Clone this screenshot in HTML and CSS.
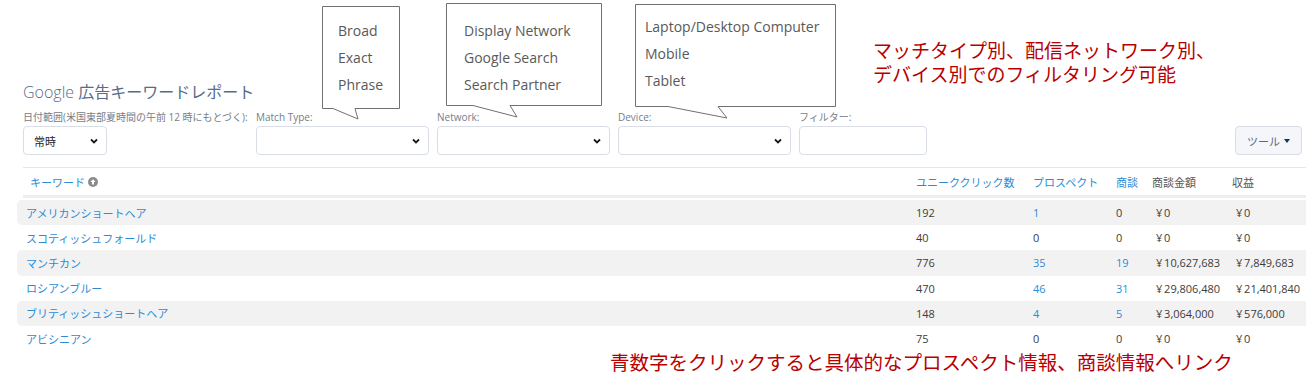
FILE: index.html
```html
<!DOCTYPE html>
<html lang="ja">
<head>
    <meta charset="UTF-8">
    <meta name="viewport" content="width=device-width, initial-scale=1.0">
    <title>Google 広告キーワードレポート</title>
    <link rel="stylesheet" href="styles.css">
</head>
<body>
    <div class="page">
        <h1 class="title"><span class="title-latin">Google</span> 広告キーワードレポート</h1>

        <div class="filters">
            <div class="filter filter-date">
                <label>日付範囲(米国東部夏時間の午前 12 時にもとづく):</label>
                <div class="select select-date">
                    <span>常時</span>
                    <svg class="chevron" width="8" height="6" viewBox="0 0 8 6"><path d="M1 1.5 L4 4.5 L7 1.5" /></svg>
                </div>
            </div>
            <div class="filter">
                <label>Match Type:</label>
                <div class="select">
                    <span></span>
                    <svg class="chevron" width="8" height="6" viewBox="0 0 8 6"><path d="M1 1.5 L4 4.5 L7 1.5" /></svg>
                </div>
            </div>
            <div class="filter">
                <label>Network:</label>
                <div class="select">
                    <span></span>
                    <svg class="chevron" width="8" height="6" viewBox="0 0 8 6"><path d="M1 1.5 L4 4.5 L7 1.5" /></svg>
                </div>
            </div>
            <div class="filter">
                <label>Device:</label>
                <div class="select">
                    <span></span>
                    <svg class="chevron" width="8" height="6" viewBox="0 0 8 6"><path d="M1 1.5 L4 4.5 L7 1.5" /></svg>
                </div>
            </div>
            <div class="filter filter-text">
                <label>フィルター:</label>
                <input type="text" class="text-input">
            </div>
            <button class="tool-btn">ツール
                <svg width="6" height="4" viewBox="0 0 6 4"><path d="M0 0 H6 L3 4 Z" /></svg>
            </button>
        </div>

        <div class="report-table">
            <div class="table-head">
                <div class="col-keyword link">キーワード
                    <svg class="sort-icon" width="10" height="10" viewBox="0 0 10 10">
                        <circle cx="5" cy="5" r="5" />
                        <path d="M5 2.2 L7.6 5 H6 V7.6 H4 V5 H2.4 Z" />
                    </svg>
                </div>
                <div class="link">ユニーククリック数</div>
                <div class="link">プロスペクト</div>
                <div class="link">商談</div>
                <div>商談金額</div>
                <div>収益</div>
            </div>

            <div class="table-row striped">
                <div class="col-keyword link">アメリカンショートヘア</div>
                <div>192</div>
                <div class="link">1</div>
                <div>0</div>
                <div class="money">¥&thinsp;0</div>
                <div class="money">¥&thinsp;0</div>
            </div>
            <div class="table-row">
                <div class="col-keyword link">スコティッシュフォールド</div>
                <div>40</div>
                <div>0</div>
                <div>0</div>
                <div class="money">¥&thinsp;0</div>
                <div class="money">¥&thinsp;0</div>
            </div>
            <div class="table-row striped">
                <div class="col-keyword link">マンチカン</div>
                <div>776</div>
                <div class="link">35</div>
                <div class="link">19</div>
                <div class="money">¥&thinsp;10,627,683</div>
                <div class="money">¥&thinsp;7,849,683</div>
            </div>
            <div class="table-row">
                <div class="col-keyword link">ロシアンブルー</div>
                <div>470</div>
                <div class="link">46</div>
                <div class="link">31</div>
                <div class="money">¥&thinsp;29,806,480</div>
                <div class="money">¥&thinsp;21,401,840</div>
            </div>
            <div class="table-row striped">
                <div class="col-keyword link">ブリティッシュショートヘア</div>
                <div>148</div>
                <div class="link">4</div>
                <div class="link">5</div>
                <div class="money">¥&thinsp;3,064,000</div>
                <div class="money">¥&thinsp;576,000</div>
            </div>
            <div class="table-row">
                <div class="col-keyword link">アビシニアン</div>
                <div>75</div>
                <div>0</div>
                <div>0</div>
                <div class="money">¥&thinsp;0</div>
                <div class="money">¥&thinsp;0</div>
            </div>
        </div>

        <!-- callouts drawn over the filter bar -->
        <svg class="callout-shapes" width="1306" height="386" viewBox="0 0 1306 386">
            <path d="M322.5 6.5 H399.5 V108.5 H355 L358 119 L333 108.5 H322.5 Z" />
            <path d="M446.5 3.5 H601.5 V105.5 H510 L517 117 L473 105.5 H446.5 Z" />
            <path d="M635.5 4.5 H835.5 V106.5 H718 L727 118 L668 106.5 H635.5 Z" />
        </svg>
        <ul class="callout-text callout-match">
            <li>Broad</li>
            <li>Exact</li>
            <li>Phrase</li>
        </ul>
        <ul class="callout-text callout-network">
            <li>Display Network</li>
            <li>Google Search</li>
            <li>Search Partner</li>
        </ul>
        <ul class="callout-text callout-device">
            <li>Laptop/Desktop Computer</li>
            <li>Mobile</li>
            <li>Tablet</li>
        </ul>

        <p class="note note-filter">マッチタイプ別、配信ネットワーク別、<br>デバイス別でのフィルタリング可能</p>
        <p class="note note-link">青数字をクリックすると具体的なプロスペクト情報、商談情報へリンク</p>
    </div>
</body>
</html>
```

FILE: styles.css
```css
* {
    margin: 0;
    padding: 0;
    box-sizing: border-box;
}

body {
    font-family: "Open Sans", "Noto Sans CJK JP", sans-serif;
    background: #ffffff;
    color: #3c3c3c;
    overflow: hidden;
}

.page {
    position: relative;
    width: 1306px;
    height: 386px;
    padding: 82px 0 0 23px;
}

.title {
    font-size: 16px;
    font-weight: normal;
    line-height: 20px;
    color: #566c8a;
}

.title-latin {
    font-weight: 300;
}

/* filter bar */
.filters {
    display: flex;
    align-items: flex-end;
    gap: 8px;
    margin-top: 8px;
    padding-right: 4px;
}

.filter {
    display: flex;
    flex-direction: column;
    gap: 2px;
    width: 173px;
}

.filter-date {
    width: 225px;
}

.filter-text {
    width: 128px;
}

.filter label {
    font-size: 10px;
    line-height: 14px;
    color: #767e89;
    white-space: nowrap;
}

.select {
    display: flex;
    align-items: center;
    justify-content: space-between;
    height: 29px;
    padding: 0 8px 0 10px;
    border: 1px solid #d8dde6;
    border-radius: 4px;
    background: #ffffff;
    font-size: 11px;
    color: #222;
}

.select-date {
    width: 84px;
}

.chevron path {
    fill: none;
    stroke: #1a1a1a;
    stroke-width: 1.8;
}

.text-input {
    height: 29px;
    border: 1px solid #d8dde6;
    border-radius: 4px;
    background: #ffffff;
}

.tool-btn {
    display: flex;
    align-items: center;
    justify-content: center;
    gap: 4px;
    margin-left: auto;
    width: 67px;
    height: 29px;
    border: 1px solid #d8dde6;
    border-radius: 4px;
    background: #f4f6f9;
    font-family: inherit;
    font-size: 11px;
    color: #54698d;
}

.tool-btn svg path {
    fill: #16325c;
}

/* table */
.report-table {
    margin-top: 12px;
}

.table-head {
    display: grid;
    grid-template-columns: 893px 117px 83px 36px 80px 1fr;
    align-items: center;
    height: 31px;
    border-top: 1px solid #e4e6ea;
    border-bottom: 3px solid #eceef1;
    font-size: 11px;
    color: #555;
}

.table-head .col-keyword {
    display: flex;
    align-items: center;
    gap: 3px;
    padding-left: 7px;
}

.sort-icon circle {
    fill: #8c8c8c;
}

.sort-icon path {
    fill: #ffffff;
}

.table-row {
    display: grid;
    grid-template-columns: 899px 117px 83px 36px 80px 1fr;
    align-items: center;
    height: 25.2px;
    margin-left: -6px;
    border-radius: 5px 0 0 5px;
    font-size: 11px;
    color: #3c3c3c;
    white-space: nowrap;
}

.table-row:first-child,
.table-head + .table-row {
    margin-top: 2px;
}

.table-row.striped {
    background: #f2f2f2;
}

.table-row .col-keyword {
    padding-left: 9px;
}

.link {
    color: #2d8bd6;
}

.money {
    padding-left: 4px;
}

/* callouts */
.callout-shapes {
    position: absolute;
    top: 0;
    left: 0;
    pointer-events: none;
}

.callout-shapes path {
    fill: #ffffff;
    stroke: #707070;
    stroke-width: 1;
}

.callout-text {
    position: absolute;
    list-style: none;
    font-size: 14px;
    line-height: 27px;
    color: #595959;
    white-space: nowrap;
}

.callout-match {
    left: 338px;
    top: 17px;
}

.callout-network {
    left: 464px;
    top: 17px;
}

.callout-device {
    left: 645px;
    top: 13px;
}

/* red notes */
.note {
    position: absolute;
    font-family: "Noto Sans CJK JP", sans-serif;
    font-size: 19px;
    line-height: 24px;
    color: #b80000;
    white-space: nowrap;
}

.note-filter {
    left: 873px;
    top: 38px;
}

.note-link {
    left: 610px;
    top: 350px;
    font-size: 19.5px;
}
```
